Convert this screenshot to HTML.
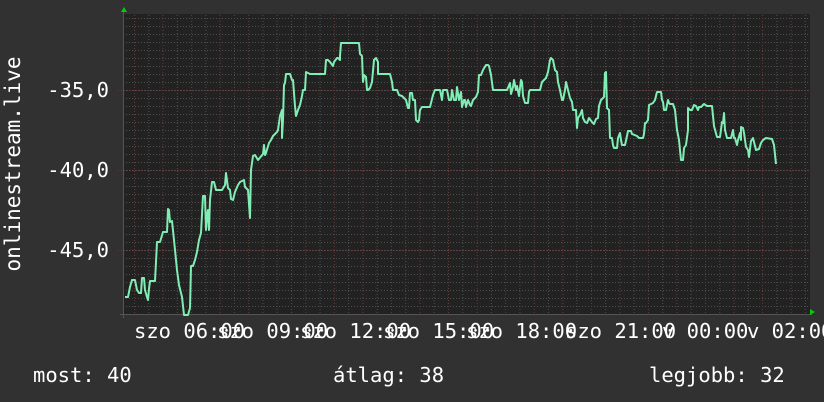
<!DOCTYPE html>
<html><head><meta charset="utf-8"><style>
html,body{margin:0;padding:0;background:#313131;}
svg{display:block;}
text{font-family:"DejaVu Sans Mono","Liberation Mono",monospace;fill:#fff;}
</style></head><body>
<svg width="824" height="402" viewBox="0 0 824 402" xmlns="http://www.w3.org/2000/svg">
<defs>
<pattern id="vmin" x="134" y="0" width="28.55" height="402" patternUnits="userSpaceOnUse">
<line x1="0.5" y1="0" x2="0.5" y2="402" stroke="#6a3838" stroke-dasharray="1,2"/>
<line x1="14.77" y1="0" x2="14.77" y2="402" stroke="#4e4e4e" stroke-dasharray="1,2"/>
</pattern>
<pattern id="hmin" x="0" y="10" width="824" height="8" patternUnits="userSpaceOnUse">
<line x1="0" y1="0.5" x2="824" y2="0.5" stroke="#4e4e4e" stroke-dasharray="1,2"/>
</pattern>
</defs>
<rect x="124" y="14" width="686" height="300" fill="#222"/>
<rect x="124" y="14" width="686" height="300" fill="url(#hmin)"/>
<rect x="124" y="14" width="686" height="300" fill="url(#vmin)"/>
<g stroke="#6a3838" stroke-dasharray="1,2">
<line x1="118" y1="90.5" x2="810" y2="90.5"/>
<line x1="118" y1="170.5" x2="810" y2="170.5"/>
<line x1="118" y1="250.5" x2="810" y2="250.5"/>
</g>
<line x1="120" y1="314.5" x2="812" y2="314.5" stroke="#555"/>
<line x1="123.5" y1="12" x2="123.5" y2="318" stroke="#555"/>
<polygon points="121,12 124,7 127,12" fill="#00d000"/>
<polygon points="810,309 815,312 810,315" fill="#00d000"/>
<polyline fill="none" stroke="#7fedb4" stroke-width="2" stroke-linejoin="round" points="
125,297 128,297 130,287 132,280 135,280 137,290 139,293 141,293 142,278 144,278 145,290 147,297 148,300 149,289 150,281 155,281 156,262 157,242 160,242 163,232 167,232 168,209 169,210 170,222 172,221 174,240 177,270 179,285 182,297 184,315 188,315 190,308 191,266 193,266 195,260 197,252 199,240 201,233 203,196 205,196 206,230 207,215 208,210 209,230 210,200 212,182 214,182 216,190 222,190 225,185 226,173 228,188 230,190 231,199 233,200 235,192 238,185 240,182 244,180 245,187 248,190 250,218 251,170 253,156 255,155 258,160 263,154 264,145 265,155 266,153 269,143 271,140 273,136 277,132 278,130 280,116 282,110 282,138 283,120 284,85 285,83 286,74 290,74 292,80 293,80 295,106 296,116 298,110 300,105 302,96 303,90 305,90 306,72 310,74 320,74 325,74 326,60 328,60 330,62 333,66 334,62 337,58 338,58 340,60 340,56 341,43 350,43 359,43 360,54 362,56 363,82 364,75 366,77 367,90 368,90 370,88 372,82 374,60 376,58 378,62 378,74 390,74 392,82 393,90 397,90 399,95 402,96 404,98 406,100 408,108 409,108 410,93 412,93 413,100 415,100 416,120 418,122 419,120 420,110 422,107 430,107 433,95 435,90 440,90 442,100 443,90 447,90 449,100 451,100 452,90 454,100 456,100 457,87 459,100 461,92 462,107 464,100 465,100 466,107 468,100 470,105 471,106 473,100 476,97 478,92 479,75 481,75 483,70 486,65 488,65 489,66 491,75 493,90 498,90 507,90 510,83 511,94 513,87 514,80 516,90 517,86 519,96 521,80 522,82 523,96 525,103 528,103 529,92 530,90 540,90 542,82 544,80 546,78 548,72 550,60 551,58 553,60 555,70 557,72 558,82 560,90 562,100 563,100 565,90 566,82 568,90 570,98 572,102 573,110 576,110 577,128 578,118 580,115 582,110 583,118 585,122 587,123 589,118 592,122 594,124 596,119 598,118 599,106 601,100 604,97 605,73 606,72 607,108 609,110 610,138 612,138 613,145 614,148 617,148 618,138 620,133 621,140 622,145 625,145 627,136 628,131 631,131 632,134 637,136 639,138 643,138 644,134 645,123 646,123 648,120 649,105 651,104 653,103 655,100 657,92 661,92 662,100 663,102 664,110 666,110 668,100 669,103 670,104 673,104 675,110 677,130 679,140 681,160 683,160 684,148 686,145 688,130 688,108 690,110 692,110 694,105 696,106 698,110 699,107 701,107 704,104 707,106 712,106 714,126 717,137 720,137 722,122 723,123 724,113 725,130 727,138 731,138 733,130 734,138 735,138 737,145 738,140 740,133 741,140 741,127 743,128 744,133 746,147 748,150 749,157 751,141 753,138 756,150 759,149 761,143 763,140 766,138 772,139 774,145 776,164"/>
<g font-size="20.5" text-anchor="end">
<text x="109" y="97">-35,0</text>
<text x="109" y="177">-40,0</text>
<text x="109" y="257">-45,0</text>
</g>
<text font-size="21" text-anchor="middle" transform="translate(20,164) rotate(-90)">onlinestream.live</text>
<g font-size="20.5" xml:space="preserve">
<text x="134" y="338">szo 06:00</text>
<text x="217" y="338">szo 09:00</text>
<text x="300" y="338">szo 12:00</text>
<text x="383" y="338">szo 15:00</text>
<text x="466" y="338">szo 18:00</text>
<text x="565" y="338">szo 21:00</text>
<text x="662" y="338">v 00:00</text>
<text x="747" y="338">v 02:00</text>
<text x="33" y="382">most: 40</text>
<text x="333" y="382">átlag: 38</text>
<text x="649" y="382">legjobb: 32</text>
</g>
</svg>
</body></html>
